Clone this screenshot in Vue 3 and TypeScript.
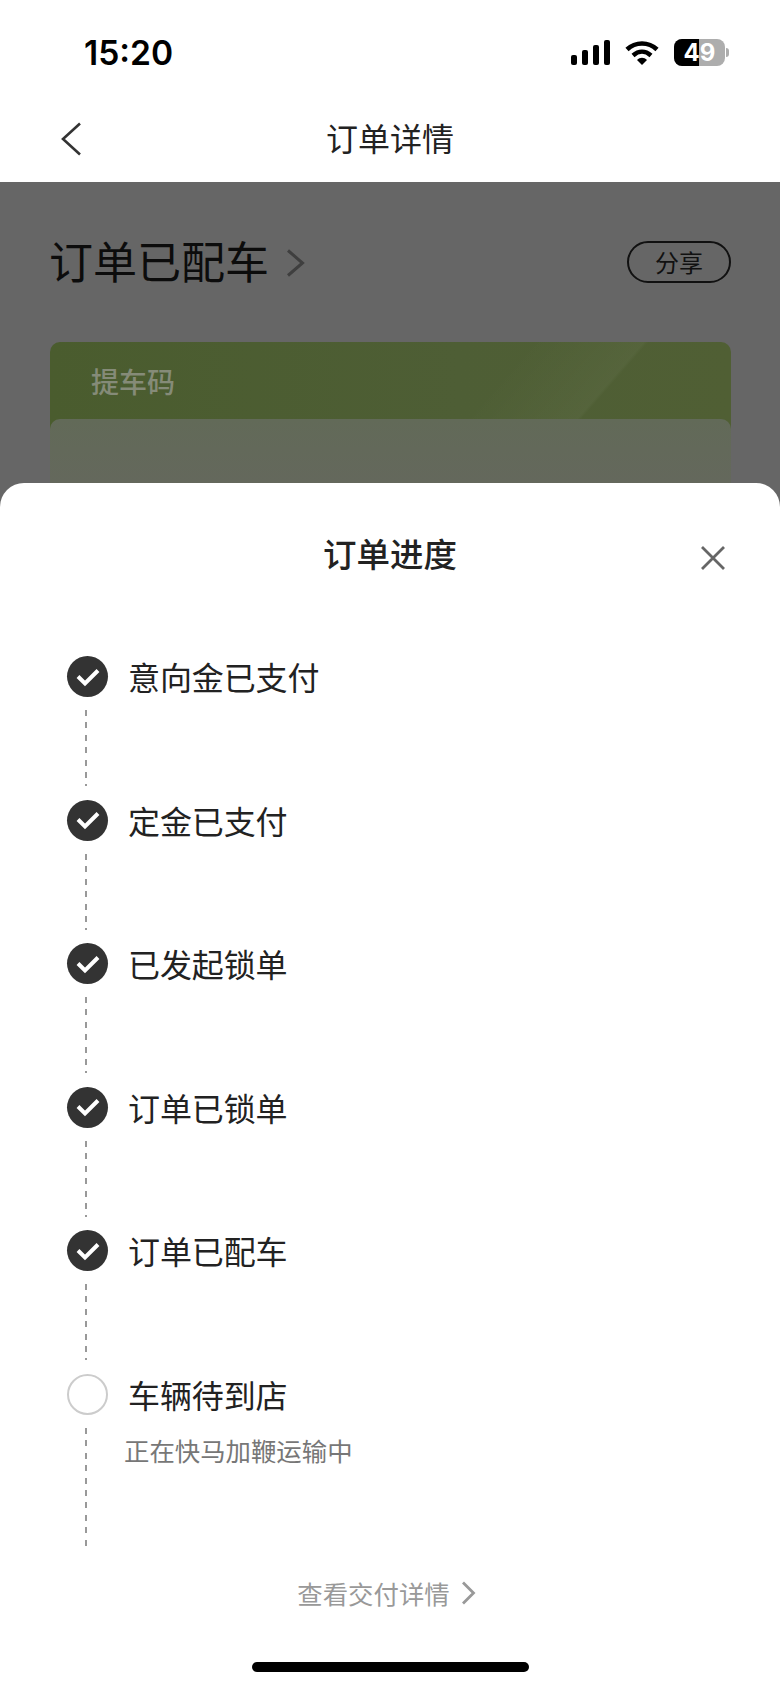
<script setup lang="ts">
interface Step {
  label: string;
  done: boolean;
  note?: string;
}

const steps: Step[] = [
  { label: "意向金已支付", done: true },
  { label: "定金已支付", done: true },
  { label: "已发起锁单", done: true },
  { label: "订单已锁单", done: true },
  { label: "订单已配车", done: true },
  { label: "车辆待到店", done: false, note: "正在快马加鞭运输中" },
];
</script>

<template>
  <div class="page">
    <div class="status-bar">
      <span class="time">15:20</span>
      <div class="status-icons">
        <div class="signal">
          <i class="bar bar-1"></i>
          <i class="bar bar-2"></i>
          <i class="bar bar-3"></i>
          <i class="bar bar-4"></i>
        </div>
        <svg class="wifi" viewBox="0 0 34 25" width="34" height="25">
          <path d="M2 9.5C10.5 1.5 23.5 1.5 32 9.5" fill="none" stroke="#000" stroke-width="4.6" />
          <path d="M8 15.5C13.5 10.5 20.5 10.5 26 15.5" fill="none" stroke="#000" stroke-width="4.4" />
          <path d="M12 20C15 17 19 17 22 20L17 25Z" fill="#000" />
        </svg>
        <div class="battery">
          <div class="battery-body">
            <div class="battery-fill"></div>
            <span class="battery-num">49</span>
          </div>
          <i class="battery-tip"></i>
        </div>
      </div>
    </div>

    <header class="nav">
      <svg class="back" viewBox="0 0 22 34" width="22" height="34">
        <path d="M20 1.5 3 17l17 15.5" fill="none" stroke="#333" stroke-width="2.6" />
      </svg>
      <h1 class="nav-title">订单详情</h1>
    </header>

    <main class="behind">
      <div class="order-head">
        <div class="order-status">
          <span>订单已配车</span>
          <svg viewBox="0 0 19 28" width="19" height="28">
            <path d="M2 1.5 16.5 14 2 26.5" fill="none" stroke="#3f3f3f" stroke-width="3" />
          </svg>
        </div>
        <button class="share">分享</button>
      </div>
      <section class="pickup">
        <div class="pickup-title">提车码</div>
        <div class="pickup-inner"></div>
      </section>
    </main>

    <section class="sheet">
      <div class="sheet-head">
        <h2 class="sheet-title">订单进度</h2>
        <svg class="close" viewBox="0 0 26 26" width="26" height="26">
          <path d="M2 2l22 22M24 2 2 24" fill="none" stroke="#666" stroke-width="2.8" />
        </svg>
      </div>

      <ol class="steps">
        <li v-for="step in steps" :key="step.label" class="step" :class="{ 'step--pending': !step.done }">
          <div class="marker">
            <span class="dot">
              <svg v-if="step.done" viewBox="0 0 26 20" width="26" height="20">
                <path d="M3 9.5l7 7L23 3.5" fill="none" stroke="#fff" stroke-width="4" />
              </svg>
            </span>
            <i class="line"></i>
          </div>
          <div class="step-text">
            <div class="step-label">{{ step.label }}</div>
            <div v-if="step.note" class="step-note">{{ step.note }}</div>
          </div>
        </li>
      </ol>

      <div class="delivery">
        <span>查看交付详情</span>
        <svg viewBox="0 0 15 24" width="15" height="24">
          <path d="M2 1.5 12.5 12 2 22.5" fill="none" stroke="#999" stroke-width="2.8" />
        </svg>
      </div>

      <div class="home-indicator"></div>
    </section>
  </div>
</template>

<style>
html,
body {
  margin: 0;
  background: #fff;
}
</style>

<style scoped>
.page {
  position: relative;
  width: 780px;
  height: 1688px;
  overflow: hidden;
  display: flex;
  flex-direction: column;
  background: #fff;
  font-family: "Noto Sans CJK SC", "Noto Sans", sans-serif;
  color: #222;
}

.status-bar {
  height: 104px;
  flex: none;
  display: flex;
  align-items: center;
  justify-content: space-between;
  padding: 0 51px 0 84px;
  box-sizing: border-box;
}

.time {
  font-family: Inter, "Liberation Sans", sans-serif;
  font-size: 33.6px;
  font-weight: 600;
  letter-spacing: 0;
  color: #000;
}

.status-icons {
  display: flex;
  align-items: center;
}

.signal {
  display: flex;
  align-items: flex-end;
  gap: 4.4px;
  height: 25px;
  margin-right: 15px;
}

.bar {
  display: block;
  width: 6.5px;
  background: #000;
  border-radius: 2px;
}

.bar-1 {
  height: 10px;
}

.bar-2 {
  height: 15px;
}

.bar-3 {
  height: 20px;
}

.bar-4 {
  height: 25px;
}

.wifi {
  display: block;
  margin-right: 15px;
}

.battery {
  display: flex;
  align-items: center;
  gap: 1px;
}

.battery-body {
  position: relative;
  width: 51px;
  height: 27px;
  border-radius: 8px;
  background: #adadad;
  overflow: hidden;
}

.battery-fill {
  width: 49%;
  height: 100%;
  background: #000;
}

.battery-num {
  position: absolute;
  inset: 0;
  display: flex;
  align-items: center;
  justify-content: center;
  font-family: Inter, "Liberation Sans", sans-serif;
  font-size: 24px;
  font-weight: 700;
  color: #fff;
}

.battery-tip {
  display: block;
  width: 3px;
  height: 9px;
  background: #adadad;
  border-radius: 0 3px 3px 0;
}

.nav {
  position: relative;
  height: 78px;
  flex: none;
  display: flex;
  align-items: center;
  justify-content: center;
  padding-bottom: 12px;
  box-sizing: border-box;
}

.back {
  position: absolute;
  left: 60px;
  top: 18px;
}

.nav-title {
  margin: 0;
  font-size: 32px;
  font-weight: 400;
  line-height: 44px;
  color: #222;
}

.behind {
  flex: 1;
  background: #666;
  padding: 0 49px 0 50px;
}

.order-head {
  display: flex;
  align-items: center;
  justify-content: space-between;
  padding-top: 59px;
  height: 42px;
}

.order-status {
  display: flex;
  align-items: center;
  gap: 17px;
  margin-left: -1px;
  margin-top: -4px;
  font-size: 44px;
  line-height: 42px;
  color: #0c0c0c;
}

.order-status svg {
  display: block;
  margin-top: 5px;
}

.share {
  width: 104px;
  height: 42px;
  box-sizing: border-box;
  padding: 0;
  border: 2px solid #111;
  border-radius: 21px;
  background: transparent;
  font: inherit;
  font-size: 24px;
  line-height: 1;
  color: #111;
}

.pickup {
  margin-top: 59px;
  height: 200px;
  border-radius: 10px;
  background:
    linear-gradient(131deg, transparent 56%, rgba(255, 255, 255, 0.035) 69.5%, transparent 70%),
    linear-gradient(90deg, #4a5c2e 0%, #4e5e35 60%, #505f34 100%);
  overflow: hidden;
}

.pickup-title {
  height: 77px;
  box-sizing: border-box;
  padding: 17px 0 0 41px;
  font-size: 28px;
  font-weight: 500;
  line-height: 44px;
  color: #858b78;
}

.pickup-inner {
  height: 123px;
  border-radius: 10px 10px 0 0;
  background: linear-gradient(180deg, #626a58 0%, #64685c 50%, #666661 100%);
}

.sheet {
  position: absolute;
  left: 0;
  right: 0;
  top: 483px;
  bottom: 0;
  background: #fff;
  border-radius: 24px 24px 0 0;
  display: flex;
  flex-direction: column;
}

.sheet-head {
  position: relative;
  height: 173px;
  flex: none;
  display: flex;
  justify-content: center;
  box-sizing: border-box;
  padding-top: 47px;
}

.sheet-title {
  margin: 0;
  font-size: 33.5px;
  font-weight: 500;
  line-height: 46px;
  color: #222;
}

.close {
  position: absolute;
  right: 54px;
  top: 62px;
}

.steps {
  list-style: none;
  margin: 0;
  padding: 0 0 0 67px;
}

.step {
  display: flex;
  gap: 20px;
  height: 143.5px;
}

.step--pending {
  height: 173px;
}

.marker {
  width: 41px;
  flex: none;
  display: flex;
  flex-direction: column;
}

.dot {
  width: 41px;
  height: 41px;
  flex: none;
  box-sizing: border-box;
  border-radius: 50%;
  background: #333;
  display: flex;
  align-items: center;
  justify-content: center;
}

.dot svg {
  display: block;
}

.step--pending .dot {
  background: #fff;
  border: 2.5px solid #ccc;
}

.line {
  display: block;
  width: 2px;
  height: 76px;
  margin: 13px 0 0 18px;
  background: repeating-linear-gradient(180deg, #999 0 6px, transparent 6px 12.4px);
}

.step--pending .line {
  height: 121px;
}

.step-text {
  margin-top: -2px;
}

.step-label {
  font-size: 32px;
  line-height: 44px;
  letter-spacing: -0.1px;
  color: #222;
}

.step-note {
  margin: 16px 0 0 -4px;
  font-size: 25.4px;
  line-height: 36px;
  color: #777;
}

.delivery {
  margin-top: 28px;
  display: flex;
  align-items: center;
  justify-content: center;
  gap: 11px;
  padding-right: 7px;
  font-size: 25.4px;
  line-height: 36px;
  color: #999;
}

.delivery svg {
  display: block;
}

.home-indicator {
  position: absolute;
  left: 252px;
  bottom: 16px;
  width: 277px;
  height: 10px;
  border-radius: 5px;
  background: #000;
}
</style>
